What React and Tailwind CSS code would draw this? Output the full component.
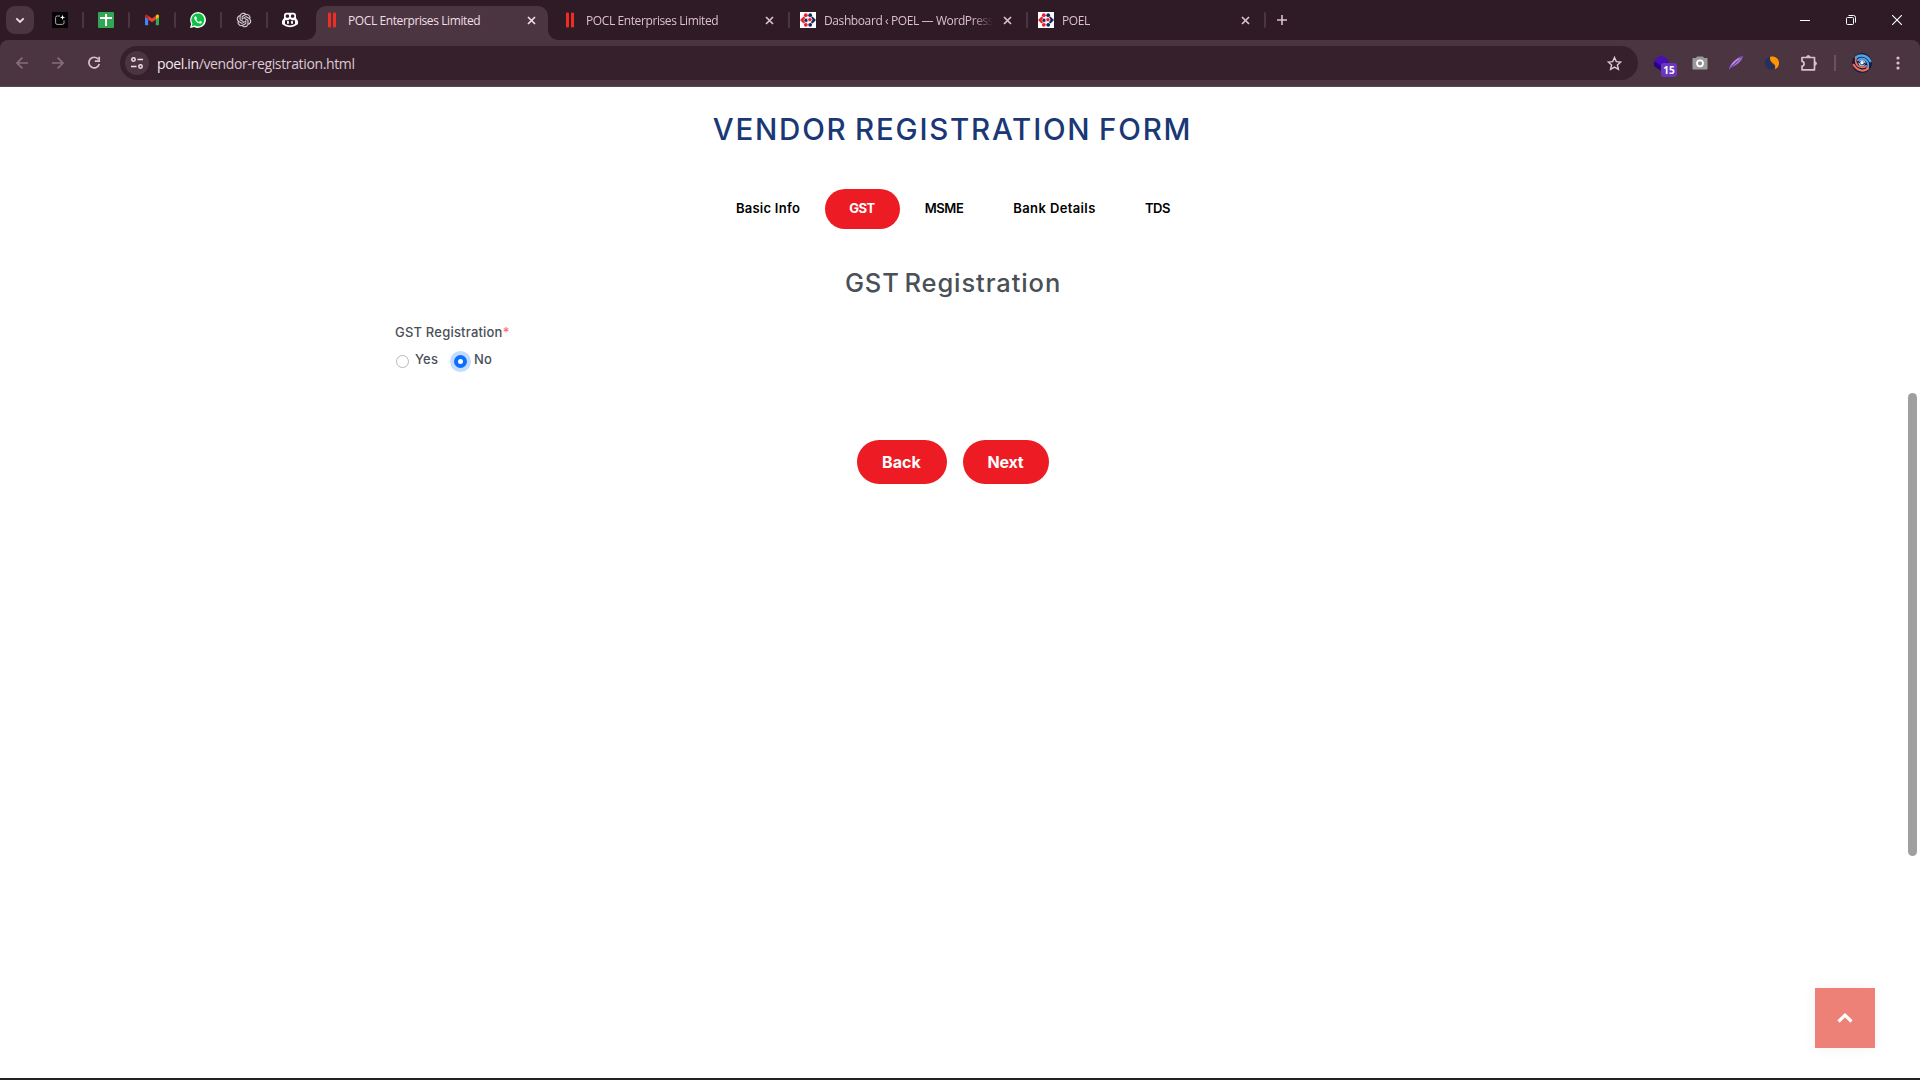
import React from "react";

const uiFont = "font-['Open_Sans','Noto_Sans',sans-serif]";

function Separator() {
  return <div className="h-4 w-0.5 shrink-0 rounded-full bg-[#4b3540]" />;
}

function StripesIcon() {
  return (
    <svg width="16" height="16" viewBox="0 0 16 16" fill="#ee2e24">
      <rect x="4" y="0.5" width="3" height="15" rx="1" />
      <rect x="9" y="0.5" width="3" height="15" rx="1" />
    </svg>
  );
}

function PoelIcon() {
  return (
    <svg width="16" height="16" viewBox="0 0 16 16">
      <rect width="16" height="16" fill="#fff" />
      <g fill="#e8202b">
        <circle cx="5.800" cy="3.200" r="1.900" />
        <circle cx="5.800" cy="12.800" r="1.900" />
        <path d="M0 8L3.500 4.600 5.500 6 3.800 8l1.700 2-2 1.400z" />
      </g>
      <g fill="#14265e">
        <circle cx="10.200" cy="3.200" r="1.900" />
        <circle cx="10.200" cy="12.800" r="1.900" />
        <path d="M16 8l-3.500-3.400-2 1.400L12.200 8l-1.700 2 2 1.400z" />
      </g>
      <circle cx="6" cy="8.300" r="2" fill="#14265e" stroke="#e9b9c4" strokeWidth=".7" />
      <circle cx="9.900" cy="7.700" r="2.100" fill="#e8202b" stroke="#fff" strokeWidth=".7" />
    </svg>
  );
}

function ClipIcon() {
  return (
    <svg width="16" height="16" viewBox="0 0 16 16">
      <rect width="16" height="16" fill="#050505" />
      <path d="M8 4H5.200A1.600 1.600 0 0 0 3.600 5.600v5.200a1.600 1.600 0 0 0 1.600 1.600h5.200a1.600 1.600 0 0 0 1.600-1.600V8.500" fill="none" stroke="#a8a8a8" strokeWidth="1" />
      <path d="M10.500 2.800l.7 1.900 1.900.7-1.900.7-.7 1.900-.7-1.900-1.900-.7 1.900-.7z" fill="#fff" />
    </svg>
  );
}

function SheetIcon() {
  return (
    <svg width="16" height="16" viewBox="0 0 16 16">
      <rect width="16" height="16" rx="1" fill="#31a653" />
      <path d="M7 2h2v3h5v2H9v7H7V7H2V5h5z" fill="#fff" />
    </svg>
  );
}

function GmailIcon() {
  return (
    <svg width="16" height="16" viewBox="0 0 16 16">
      <path d="M1 4v8.300c0 .6.4 1 1 1h2.200V6.500z" fill="#4285f4" />
      <path d="M15 4v8.300c0 .6-.4 1-1 1h-2.200V6.500z" fill="#34a853" />
      <path d="M11.800 3.800V7.500L15 5.100V4c0-1.300-1.400-2-2.400-1.200z" fill="#fbbc04" />
      <path d="M4.200 7.500V3.700L8 6.500l3.800-2.800v3.800L8 10.300z" fill="#ea4335" />
      <path d="M1 4v1.100l3.200 2.400V3.700L3.400 3C2.400 2.200 1 2.800 1 4z" fill="#c5221f" />
    </svg>
  );
}

function WhatsappIcon() {
  return (
    <svg width="16" height="16" viewBox="0 0 16 16">
      <path d="M0 16l1.150-4.100A7.900 7.900 0 1 1 4.200 14.900z" fill="#fff" />
      <path d="M1.700 14.300l.8-2.700A6.500 6.500 0 1 1 4.700 13.600z" fill="#0cc143" />
      <path d="M5.500 4.200c-.3 0-1.300.6-1.200 1.900.2 2.400 3.200 5.500 5.700 5.500 1 0 1.800-.7 1.900-1.600 0-.4-1.500-1.100-1.800-1.100s-.7 1-1 1c-.8-.2-2.400-1.500-2.700-2.500 0-.3.6-.6.600-1 0-.3-.7-2.200-1.500-2.200z" fill="#fff" />
    </svg>
  );
}

function GptIcon() {
  return (
    <svg width="16" height="16" viewBox="0 0 24 24">
      <path
        transform="translate(1.200 1.200) scale(.9)"
        fill="#dcd5d9"
        stroke="#dcd5d9"
        strokeWidth=".3"
        d="M22.282 9.821a5.985 5.985 0 0 0-.516-4.910 6.046 6.046 0 0 0-6.510-2.900A6.065 6.065 0 0 0 4.981 4.180a5.985 5.985 0 0 0-3.998 2.900 6.046 6.046 0 0 0 .743 7.097 5.980 5.980 0 0 0 .510 4.911 6.051 6.051 0 0 0 6.515 2.900A5.985 5.985 0 0 0 13.260 24a6.056 6.056 0 0 0 5.772-4.206 5.990 5.990 0 0 0 3.997-2.900 6.056 6.056 0 0 0-.747-7.073zM13.260 22.430a4.476 4.476 0 0 1-2.876-1.040l.141-.081 4.779-2.758a.795.795 0 0 0 .392-.681v-6.737l2.020 1.168a.071.071 0 0 1 .038.052v5.583a4.504 4.504 0 0 1-4.494 4.494zM3.600 18.304a4.470 4.470 0 0 1-.535-3.014l.142.085 4.783 2.759a.771.771 0 0 0 .780 0l5.843-3.369v2.332a.080.080 0 0 1-.033.062L9.740 19.950a4.500 4.500 0 0 1-6.140-1.646zM2.340 7.896a4.485 4.485 0 0 1 2.366-1.973V11.600a.766.766 0 0 0 .388.677l5.815 3.354-2.020 1.168a.076.076 0 0 1-.071 0l-4.830-2.786A4.504 4.504 0 0 1 2.340 7.872zm16.597 3.855l-5.833-3.387L15.119 7.200a.076.076 0 0 1 .071 0l4.830 2.791a4.494 4.494 0 0 1-.676 8.105v-5.678a.790.790 0 0 0-.407-.667zm2.010-3.023l-.141-.085-4.774-2.782a.776.776 0 0 0-.785 0L9.409 9.230V6.897a.066.066 0 0 1 .028-.061l4.830-2.787a4.500 4.500 0 0 1 6.680 4.660zm-12.640 4.135l-2.020-1.164a.080.080 0 0 1-.038-.057V6.075a4.500 4.500 0 0 1 7.375-3.453l-.142.080L8.704 5.460a.795.795 0 0 0-.393.681zm1.097-2.365l2.602-1.500 2.607 1.500v2.999l-2.597 1.500-2.607-1.500z"
      />
    </svg>
  );
}

function CopilotIcon() {
  return (
    <svg width="16" height="16" viewBox="0 0 16 16">
      <path d="M4.600.8h6.800c1.700 0 2.600 1 2.600 2.600v2.700l1.700 2.400c.2.300.3.600.3 1v2c0 .5-.2.800-.6 1.100A13 13 0 0 1 8 15.300a13 13 0 0 1-7.400-2.700c-.4-.3-.6-.6-.6-1.100v-2c0-.4.1-.7.300-1L2 6.100V3.400C2 1.800 2.900.8 4.600.8z" fill="#fff" />
      <rect x="3.700" y="2.500" width="3.400" height="3.300" rx="1.400" fill="#2f1b26" />
      <rect x="8.900" y="2.500" width="3.400" height="3.300" rx="1.400" fill="#2f1b26" />
      <path d="M3 8.200c2 .4 4-.1 5-1.200 1 1.100 3 1.600 5 1.200v3.900a11 11 0 0 1-10 0z" fill="#2f1b26" />
      <rect x="5" y="8.800" width="1.900" height="3.200" rx=".9" fill="#fff" />
      <rect x="9.100" y="8.800" width="1.900" height="3.200" rx=".9" fill="#fff" />
    </svg>
  );
}

function CloseIcon({ color }) {
  return (
    <svg width="9" height="9" viewBox="0 0 9 9" className="shrink-0">
      <path d="M1 1l7 7M8 1L1 8" stroke={color} strokeWidth="1.700" fill="none" />
    </svg>
  );
}

function BrowserTab({ title, icon, active, divider }) {
  return (
    <div className="relative flex h-10 w-[238px] shrink-0 items-center pl-2">
      {active && (
        <svg className="absolute -left-2.5 top-1.5" width="252" height="34" viewBox="0 0 252 34">
          <path d="M0 34A10 10 0 0 0 10 24V10A10 10 0 0 1 20 0H232A10 10 0 0 1 242 10V24A10 10 0 0 0 252 34Z" fill="#4b3540" />
        </svg>
      )}
      <div className="relative flex w-full items-center">
        {icon}
        <div
          className={
            "ml-2 flex h-5 w-[173px] items-center whitespace-nowrap pt-px text-[12px] tracking-[-0.4px] " +
            (active ? "text-[#f0dfe7]" : "text-[#dcc0cd] [mask-image:linear-gradient(to_right,#000_148px,transparent_169px)]")
          }
        >
          {title}
        </div>
        <div className="ml-[2px] flex w-4 shrink-0 justify-center">
          <CloseIcon color={active ? "#f0dfe7" : "#dcc0cd"} />
        </div>
        {divider && <div className="ml-[11px]"><Separator /></div>}
      </div>
    </div>
  );
}

function TabStrip() {
  const pinned = [<ClipIcon />, <SheetIcon />, <GmailIcon />, <WhatsappIcon />, <GptIcon />, <CopilotIcon />];
  return (
    <div className="flex h-10 items-center bg-[#2f1b26]">
      <div className="ml-1.5 flex h-7 w-7 shrink-0 items-center justify-center rounded-[9px] bg-[#4b3540]">
        <svg width="10" height="7" viewBox="0 0 10 7">
          <path d="M1.300 1.300L5 5l3.700-3.700" fill="none" stroke="#f0dfe7" strokeWidth="1.800" />
        </svg>
      </div>
      <div className="ml-[18px] flex w-[264px] shrink-0 items-center">
        {pinned.map((icon, i) => (
          <div key={i} className="flex shrink-0 items-center">
            {icon}
            {i < 5 && (
              <div className="ml-3.5 mr-3.5">
                <Separator />
              </div>
            )}
          </div>
        ))}
      </div>
      <BrowserTab active title="POCL Enterprises Limited" icon={<StripesIcon />} />
      <BrowserTab divider title="POCL Enterprises Limited" icon={<StripesIcon />} />
      <BrowserTab divider title="Dashboard ‹ POEL — WordPress" icon={<PoelIcon />} />
      <BrowserTab divider title="POEL" icon={<PoelIcon />} />
      <svg className="ml-[9px] shrink-0" width="10" height="10" viewBox="0 0 10 10">
        <path d="M5 0v10M0 5h10" stroke="#dcc0cd" strokeWidth="1.600" />
      </svg>
      <div className="ml-auto flex h-10 text-white">
        <div className="flex w-[46px] items-center justify-center">
          <div className="h-px w-2.5 bg-white" />
        </div>
        <div className="flex w-[46px] items-center justify-center">
          <svg width="10" height="10" viewBox="0 0 10 10" fill="none" stroke="#fff">
            <rect x=".5" y="2.500" width="7" height="7" rx="1" />
            <path d="M2.500.5H7.500a2 2 0 0 1 2 2V7.500" />
          </svg>
        </div>
        <div className="flex w-[46px] items-center justify-center">
          <svg width="10" height="10" viewBox="0 0 10 10" stroke="#fff" strokeWidth="1.100">
            <path d="M0 0l10 10M10 0L0 10" />
          </svg>
        </div>
      </div>
    </div>
  );
}

function Slot({ children }) {
  return <div className="flex h-9 w-9 shrink-0 items-center justify-center">{children}</div>;
}

function SpiralAvatar() {
  return (
    <svg width="20" height="20" viewBox="0 0 20 20" fill="none" strokeLinecap="round">
      <circle cx="10" cy="10" r="10" fill="#16183a" />
      <g transform="rotate(28 10 10)">
        <path d="M2 8C4 2.800 11 .8 16.500 4.500" stroke="#4da3e8" strokeWidth="2.400" />
        <path d="M5 9.500C6.500 5 12.500 4 16 8c1.300 1.500 1.500 3.200 1 5" stroke="#4da3e8" strokeWidth="1.900" />
        <path d="M18 12C16 17.200 9 19.200 3.500 15.500" stroke="#f0705e" strokeWidth="2.200" />
        <path d="M15 10.500C13.500 15 7.500 16 4 12c-1-1.200-1.500-2.500-1.400-3.500" stroke="#f0705e" strokeWidth="1.700" />
        <path d="M13 10.500c-1 2.600-4 3-5.700 1M7 9.500c1-2.600 4-3 5.700-1" stroke="#9fcdf3" strokeWidth="1.200" />
      </g>
      <circle cx="10" cy="9.700" r="1.800" fill="#fff" />
    </svg>
  );
}

function Toolbar() {
  return (
    <div className="bg-[#2f1b26]">
      <div className="flex h-[47px] items-center rounded-t-[8px] border-b border-[#5b4851] bg-[#4b3540] pl-1">
        <Slot>
          <svg width="12" height="12" viewBox="0 0 12 12" fill="none" stroke="#866f7a" strokeWidth="1.600">
            <path d="M12 6H1M6.400.6L1 6l5.400 5.400" />
          </svg>
        </Slot>
        <Slot>
          <svg width="12" height="12" viewBox="0 0 12 12" fill="none" stroke="#866f7a" strokeWidth="1.600">
            <path d="M0 6h11M5.600.6L11 6l-5.400 5.400" />
          </svg>
        </Slot>
        <Slot>
          <svg width="14" height="14" viewBox="0 0 14 14" fill="none" stroke="#dcc0cd" strokeWidth="1.700">
            <path d="M11.400 3.300A5.300 5.300 0 1 0 12.300 8" />
            <path d="M12.200.8v4.400H7.800" />
          </svg>
        </Slot>
        <div className="ml-2 flex h-[34px] w-[1518px] shrink-0 items-center rounded-full bg-[#35202b] pl-[5px] pr-4">
          <div className="flex h-6 w-6 items-center justify-center rounded-full bg-[#4b3540]">
            <svg width="12" height="12" viewBox="0 0 12 12" fill="none" stroke="#f0dfe7" strokeWidth="1.500">
              <circle cx="2.500" cy="2.500" r="1.700" />
              <path d="M6.500 2.500H12M0 9.500h5.500" />
              <circle cx="9.500" cy="9.500" r="1.700" />
            </svg>
          </div>
          <div className="ml-2 whitespace-nowrap text-[14px] tracking-[-0.36px] text-[#dcc9d2]">
            <span className="text-[#f3e8ee]">poel.in</span>/vendor-registration.html
          </div>
          <svg className="ml-auto" width="15" height="15" viewBox="0 0 15 15" fill="none" stroke="#dcc9d2" strokeWidth="1.400">
            <path d="M7.500 1.500l1.800 4.100 4.500.4-3.400 3 1 4.400-3.900-2.300-3.900 2.300 1-4.400-3.400-3 4.500-.4z" />
          </svg>
        </div>
        <div className="ml-2 flex items-center">
          <Slot>
            <div className="relative h-5 w-5">
              <svg width="24" height="22" viewBox="0 0 24 22" className="absolute -left-1 top-0">
                <path d="M4 9h14v6l-7 3-7-5z" fill="#260580" />
                <path d="M11.500 2l8 5.500-8 5.500-8-5.500z" fill="#4a0fb4" />
              </svg>
              <div className="absolute left-[7px] top-[10px] flex h-3.5 w-4 items-center justify-center rounded-[3px] bg-[#6b36c0] text-[10px] font-bold text-white">15</div>
            </div>
          </Slot>
          <Slot>
            <svg width="16" height="14" viewBox="0 0 16 14">
              <path d="M1.500 2H4l1-1.500h6L12 2h2.500c.6 0 1 .4 1 1v9.500c0 .6-.4 1-1 1h-13c-.6 0-1-.4-1-1V3c0-.6.4-1 1-1z" fill="#9b9b9b" />
              <circle cx="8" cy="7.300" r="3" fill="#8b8b8b" stroke="#fff" strokeWidth="1.800" />
            </svg>
          </Slot>
          <Slot>
            <svg width="16" height="16" viewBox="0 0 16 16">
              <path d="M1 15.500C1.300 10 6 4 15 .5c-.3 3.500-3 7.500-7.500 9.800C5 11.700 3 12.500 1 15.500z" fill="#a06fd0" />
              <path d="M1 15.500C4 10.500 9 6.500 15 .5" stroke="#5b2796" strokeWidth="1" fill="none" />
              <path d="M4.500 9.500c2-2.500 4.500-4.500 7-6" stroke="#dcb8f4" strokeWidth=".9" fill="none" />
            </svg>
          </Slot>
          <Slot>
            <svg width="16" height="16" viewBox="0 0 16 16">
              <path d="M6.500 1.800C3 2 .9 5 .9 8c0 3.800 3 6.500 6.400 6.500 1.900 0 3.200-.8 3.800-2.300C10 10.500 8.500 9.700 7 7.900 5.500 6 5.500 4 6.500 1.800z" fill="#25305f" />
              <path d="M6.200 1.700C10.500.6 15.100 3.500 15.100 8c0 3-1.600 5.300-4.300 6.200.9-2.500.4-4.200-1.200-5.400C7.500 7.300 5.300 5 6.200 1.700z" fill="#ff9500" />
            </svg>
          </Slot>
          <Slot>
            <svg width="18" height="18" viewBox="0 0 18 18" fill="none" stroke="#dcc0cd" strokeWidth="1.700" strokeLinejoin="round" className="ml-px">
              <path d="M2 3.500H14.500V15.800H2V12.200C4.800 12 4.800 7.500 2 7.300Z" />
              <path d="M6.700 3.300C6.700.9 10 .9 10 3.300M14.700 7.700c2.400 0 2.400 3.500 0 3.500" fill="#dcc0cd" strokeWidth="1" />
            </svg>
          </Slot>
          <div className="ml-2 h-4 w-0.5 bg-[#6b5260]" />
          <div className="ml-2 flex h-9 w-9 items-center justify-center">
            <SpiralAvatar />
          </div>
          <Slot>
            <svg width="4" height="14" viewBox="0 0 4 14" fill="#dcc0cd">
              <circle cx="2" cy="2" r="1.600" />
              <circle cx="2" cy="7" r="1.600" />
              <circle cx="2" cy="12" r="1.600" />
            </svg>
          </Slot>
        </div>
      </div>
    </div>
  );
}

function StepTabs() {
  const base = "flex h-10 items-center justify-center text-[13px] whitespace-nowrap ";
  return (
    <div className="mt-[42px] flex justify-center font-semibold text-black">
      <div className={base + "w-[114px] pl-px tracking-[0.25px]"}>Basic Info</div>
      <div className={base + "w-[75px] rounded-[20px] bg-[#ed1c24] font-bold tracking-[-0.5px] text-white"}>GST</div>
      <div className={base + "w-[88px] pl-[1px] tracking-[-0.4px]"}>MSME</div>
      <div className={base + "w-[132px] pl-[2px] tracking-[0.38px]"}>Bank Details</div>
      <div className={base + "w-[75px] pl-px tracking-[-0.4px]"}>TDS</div>
    </div>
  );
}

function Radio({ checked }) {
  return checked ? (
    <div className="h-[13px] w-[13px] rounded-full border-4 border-[#0d6efd] bg-white shadow-[0_0_0_4px_#c2dbfe]" />
  ) : (
    <div className="h-[13px] w-[13px] rounded-full border border-[#b5b8bb] bg-white" />
  );
}

function VendorPage() {
  return (
    <main className="relative flex h-[993px] w-full flex-col border-b-2 border-[#222] bg-white font-['Inter','Open_Sans',sans-serif]">
      <div className="flex w-[1905px] flex-col">
        <h1 className="mt-[23px] flex h-[38px] items-center justify-center text-[29.500px] font-medium tracking-[1.780px] [word-spacing:-2px] text-[#1a3776]">
          VENDOR REGISTRATION FORM
        </h1>
        <div className="-mt-px">
          <StepTabs />
        </div>
        <h2 className="mt-9 flex h-9 items-center justify-center pl-px text-[25.500px] font-medium tracking-[0.900px] [word-spacing:-3px] text-[#495057]">
          GST Registration
        </h2>
        <div className="ml-[395px] mt-[21px] text-[13px] font-medium leading-5 tracking-[0.2px] text-[#495057]">
          <div>
            GST Registration<span className="text-[#ff6b6b]">*</span>
          </div>
          <div className="mt-[7px] flex h-5 items-center">
            <div className="ml-[1px] mt-[5px]"><Radio /></div>
            <div className="ml-[6px] w-[39px]">Yes</div>
            <div className="mt-[5px]"><Radio checked /></div>
            <div className="ml-[7px]">No</div>
          </div>
        </div>
        <div className="mt-[71px] flex justify-center gap-4 text-[16px] font-bold text-white">
          <button className="h-11 w-[90px] rounded-[22px] bg-[#ed1c24] tracking-[0.100px]">Back</button>
          <button className="h-11 w-[86px] rounded-[22px] bg-[#ed1c24] tracking-[-0.2px]">Next</button>
        </div>
      </div>
      <div className="absolute right-[3px] top-[306px] h-[463px] w-[9px] rounded-full bg-[#9f9f9f]" />
      <div className="absolute bottom-[30px] right-[45px] flex h-[60px] w-[60px] items-center justify-center bg-[#ed8077] shadow-[0_0_14px_rgba(0,0,0,0.05)]">
        <svg width="16" height="10" viewBox="0 0 16 10">
          <path d="M1.500 8.500L8 2.200l6.500 6.300" fill="none" stroke="#fff" strokeWidth="3.200" />
        </svg>
      </div>
    </main>
  );
}

export default function App() {
  return (
    <div className="h-[1080px] w-[1920px] overflow-hidden bg-white">
      <header className={uiFont}>
        <TabStrip />
        <Toolbar />
      </header>
      <VendorPage />
    </div>
  );
}
